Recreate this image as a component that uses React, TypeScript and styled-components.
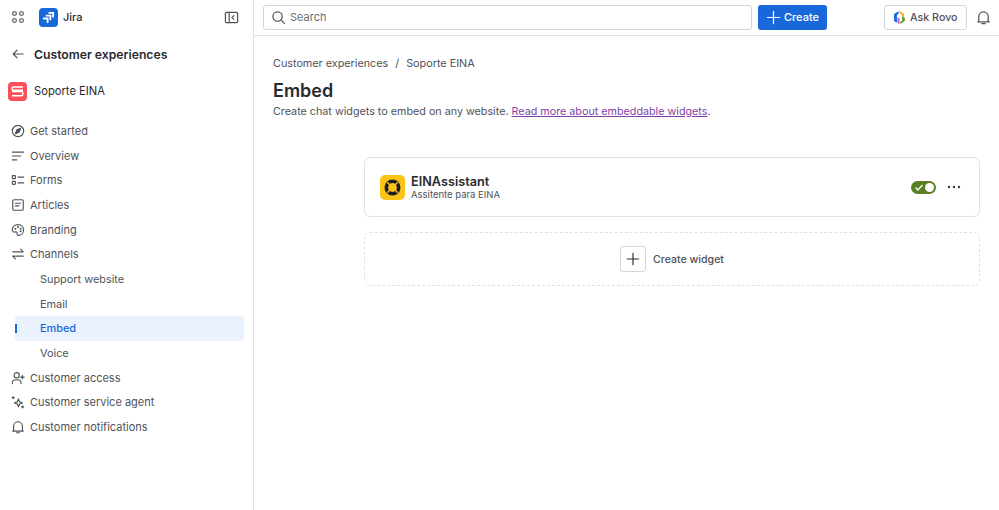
import * as React from 'react'
import styled, { createGlobalStyle } from 'styled-components'

const GlobalStyle = createGlobalStyle`
  html, body { margin: 0; padding: 0; background: #fff; }
  body { font-family: Inter, "Liberation Sans", sans-serif; color: #292a2e; }
`

const Page = styled.div`
  display: flex;
  width: 999px;
  height: 510px;
  overflow: hidden;
`

const Sidebar = styled.aside`
  width: 254px;
  flex: none;
  box-sizing: border-box;
  border-right: 1px solid #dfe1e6;
  padding: 7px 9px 0 0;
`

const AppRow = styled.div`
  display: flex;
  align-items: center;
  height: 20px;
  padding-left: 11px;
`

const JiraName = styled.span`
  font-size: 11px;
  font-weight: 500;
  margin-left: 5px;
  color: #292a2e;
`

const CollapseButton = styled.span`
  margin-left: auto;
  margin-right: 5px;
  display: flex;
`

const BackRow = styled.div`
  display: flex;
  align-items: center;
  height: 20px;
  margin-top: 17px;
  padding-left: 11px;
  gap: 9px;
`

const BackTitle = styled.span`
  font-size: 12.2px;
  font-weight: 600;
  color: #292a2e;
`

const ProjectRow = styled.div`
  display: flex;
  align-items: center;
  gap: 7px;
  height: 20px;
  margin-top: 17px;
  padding-left: 8px;
  font-size: 11.2px;
  color: #292a2e;
`

const NavList = styled.nav`
  display: flex;
  flex-direction: column;
  margin-top: 17.9px;
`

const NavItem = styled.div<{ $sub?: boolean; $active?: boolean }>`
  position: relative;
  display: flex;
  align-items: center;
  gap: 5px;
  height: 24.65px;
  flex: none;
  box-sizing: border-box;
  margin-left: ${p => (p.$sub ? '15px' : '0')};
  padding-left: ${p => (p.$sub ? '25px' : '11px')};
  font-size: ${p => (p.$sub ? '10.9px' : '11px')};
  font-weight: ${p => (p.$active ? 500 : 400)};
  color: ${p => (p.$active ? '#1868db' : '#505258')};
  background: ${p => (p.$active ? '#e9f2fe' : 'transparent')};
  border-radius: 3px;
`

const ActiveMark = styled.span`
  position: absolute;
  left: 0;
  top: 8px;
  width: 1.5px;
  height: 9px;
  background: #1868db;
`

const Main = styled.main`
  flex: 1;
  min-width: 0;
  display: flex;
  flex-direction: column;
`

const TopBar = styled.header`
  display: flex;
  align-items: center;
  height: 36px;
  flex: none;
  box-sizing: border-box;
  border-bottom: 1px solid #dfe1e6;
  padding: 0 0 1px 9px;
`

const SearchBox = styled.div`
  display: flex;
  align-items: center;
  gap: 4px;
  width: 489px;
  height: 25px;
  box-sizing: border-box;
  border: 1px solid #d4d6db;
  border-radius: 3px;
  padding-left: 7px;
  font-size: 11px;
  color: #6b6e76;
`

const CreateButton = styled.button`
  display: flex;
  align-items: center;
  gap: 3px;
  width: 69px;
  height: 25px;
  margin-left: 6px;
  padding: 0 0 0 8px;
  border: 0;
  border-radius: 3px;
  background: #1868db;
  color: #fff;
  font: 500 11px Inter, sans-serif;
`

const RovoButton = styled.button`
  display: flex;
  align-items: center;
  gap: 3px;
  width: 83px;
  height: 25px;
  margin-left: 57px;
  padding: 0 0 0 7px;
  box-sizing: border-box;
  border: 1px solid #d4d6db;
  border-radius: 3px;
  background: #fff;
  color: #505258;
  font: 500 10.7px Inter, sans-serif;
`

const BellButton = styled.span`
  display: flex;
  margin-left: 9px;
`

const Content = styled.div`
  padding: 21px 19px 0 19px;
`

const Breadcrumbs = styled.div`
  display: flex;
  gap: 7px;
  font-size: 10.8px;
  line-height: 14px;
  color: #505258;
`

const Title = styled.h1`
  margin: 8px 0 0;
  font-size: 18px;
  line-height: 24px;
  font-weight: 600;
  color: #292a2e;
`

const Lead = styled.p`
  margin: 2px 0 0;
  font-size: 10.75px;
  line-height: 14px;
  color: #505258;
`

const LeadLink = styled.a`
  color: #803fa5;
  text-decoration: underline;
`

const Widgets = styled.section`
  display: flex;
  flex-direction: column;
  gap: 15px;
  margin: 38px 0 0 91px;
  width: 616px;
`

const WidgetCard = styled.div`
  display: flex;
  align-items: center;
  height: 60px;
  box-sizing: border-box;
  border: 1px solid #dfe1e6;
  border-radius: 6px;
  padding: 0 18px 0 15px;
`

const WidgetLogo = styled.span`
  display: flex;
  align-items: center;
  justify-content: center;
  width: 25px;
  height: 25px;
  border-radius: 5px;
  background: #fcc419;
`

const WidgetText = styled.div`
  display: flex;
  flex-direction: column;
  margin-left: 6px;
`

const WidgetName = styled.span`
  font-size: 12.7px;
  line-height: 15px;
  font-weight: 600;
  color: #292a2e;
`

const WidgetDesc = styled.span`
  font-size: 9.5px;
  line-height: 12px;
  color: #505258;
`

const Toggle = styled.span`
  position: relative;
  display: block;
  width: 25px;
  height: 13px;
  margin-left: auto;
  border-radius: 7px;
  background: #5b7f24;
`

const ToggleKnob = styled.span`
  position: absolute;
  right: 2px;
  top: 2px;
  width: 9px;
  height: 9px;
  border-radius: 50%;
  background: #fff;
`

const ToggleCheck = styled.svg`
  position: absolute;
  left: 3px;
  top: 2px;
`

const MoreDots = styled.span`
  display: flex;
  margin-left: 11px;
`

const AddCard = styled.div`
  display: flex;
  align-items: center;
  justify-content: center;
  gap: 7px;
  height: 54px;
  box-sizing: border-box;
  border: 1px dashed #dfe1e6;
  border-radius: 6px;
  font-size: 10.6px;
  font-weight: 500;
  color: #505258;
`

const AddSquare = styled.span`
  display: flex;
  align-items: center;
  justify-content: center;
  width: 26px;
  height: 26px;
  box-sizing: border-box;
  border: 1px solid #d4d6db;
  border-radius: 3px;
`

type IconProps = { size?: number; color?: string }

const Stroke: React.FC<IconProps & { children: React.ReactNode }> = ({ size = 14, color = '#505258', children }) => (
  <svg width={size} height={size} viewBox="0 0 16 16" fill="none" stroke={color} strokeWidth="1.3" strokeLinecap="round" strokeLinejoin="round">
    {children}
  </svg>
)

const AppsIcon = () => (
  <Stroke size={14}>
    <rect x="2" y="2" width="4" height="4" rx="1.4" />
    <rect x="10" y="2" width="4" height="4" rx="1.4" />
    <rect x="2" y="10" width="4" height="4" rx="1.4" />
    <rect x="10" y="10" width="4" height="4" rx="1.4" />
  </Stroke>
)

const JiraLogoMark = styled.svg`
  margin-left: 14px;
  flex: none;
`

const JiraLogo = () => (
  <JiraLogoMark width="19" height="19" viewBox="0 0 19 19">
    <rect width="19" height="19" rx="4" fill="#1868db" />
    <path d="M9.5 4h5.5v5.5h-1.8V5.8H9.5z" fill="#fff" />
    <path d="M6.8 6.8h5.5v5.5h-1.8V8.6H6.8z" fill="#fff" />
    <path d="M4 9.6h5.5V15H7.7v-3.6H4z" fill="#fff" />
  </JiraLogoMark>
)

const CollapseIcon = () => (
  <Stroke size={15}>
    <rect x="1.5" y="2.5" width="13" height="11" rx="1.2" />
    <path d="M5.5 2.5v11M10.5 6L8.5 8l2 2" />
  </Stroke>
)

const BackIcon = () => (
  <Stroke size={14}>
    <path d="M14 8H2.5M7 3.5L2.5 8 7 12.5" />
  </Stroke>
)

const ProjectLogo = () => (
  <svg width="19" height="19" viewBox="0 0 19 19">
    <rect width="19" height="19" rx="4" fill="#fc4f5c" />
    <path d="M15 5H5.2a1 1 0 0 0-1 1v1.2a1 1 0 0 0 1 1H15M4 9.5h9.8a1 1 0 0 1 1 1v2.2a1 1 0 0 1-1 1H4" stroke="#fff" strokeWidth="1.4" fill="none" />
  </svg>
)

const CompassIcon = () => (
  <Stroke>
    <circle cx="8" cy="8" r="6.5" />
    <path d="M11 5L9.3 9.3 5 11l1.7-4.3z" fill="#505258" />
  </Stroke>
)

const OverviewIcon = () => (
  <Stroke>
    <path d="M1.5 3.5h13M1.5 8h9.5M1.5 12.5h5" />
  </Stroke>
)

const FormsIcon = () => (
  <Stroke>
    <rect x="1.5" y="3" width="3.5" height="3.5" rx=".6" />
    <rect x="1.5" y="9.5" width="3.5" height="3.5" rx=".6" />
    <path d="M8 4.7h6.5M8 11.3h6.5" />
  </Stroke>
)

const ArticlesIcon = () => (
  <Stroke>
    <rect x="2" y="2" width="12" height="12" rx="1.5" />
    <path d="M5 6h6M5 9h4" />
  </Stroke>
)

const BrandingIcon = () => (
  <Stroke>
    <path d="M8 1.8c-3.8 0-6.6 2.7-6.6 5.9 0 2 1.5 3 3 2.6 1.5-.4 2.9.1 2.6 1.7-.3 1.5.4 2.3 1.5 2.2 3.4-.3 5.9-3.2 5.9-6.5 0-3.3-2.7-5.9-6.4-5.9z" />
    <circle cx="5" cy="6.5" r=".5" fill="#505258" />
    <circle cx="8" cy="4.7" r=".5" fill="#505258" />
    <circle cx="11" cy="6.5" r=".5" fill="#505258" />
    <circle cx="11" cy="9.5" r=".5" fill="#505258" />
  </Stroke>
)

const ChannelsIcon = () => (
  <Stroke>
    <path d="M2 5.5h12M11 2.5l3 3M14 10.5H2M5 13.5l-3-3" />
  </Stroke>
)

const CustomerAccessIcon = () => (
  <Stroke>
    <circle cx="6.5" cy="4.8" r="3" />
    <path d="M1.5 14.5v-1.2c0-2 1.7-3.3 5-3.3s5 1.3 5 3.3v1.2M13 5v4M11 7h4" />
  </Stroke>
)

const AgentIcon = () => (
  <Stroke>
    <path d="M8.5 4.5l1.3 3.2 3.2 1.3-3.2 1.3-1.3 3.2-1.3-3.2L4 9l3.2-1.3z" />
    <path d="M2.5 1.8v2.4M1.3 3h2.4M13.3 12.3v2.4M12.1 13.5h2.4" />
  </Stroke>
)

const BellIcon: React.FC<IconProps> = ({ size = 14, color }) => (
  <Stroke size={size} color={color}>
    <path d="M3 11.5V7a5 5 0 0 1 10 0v4.5l1 1.2H2zM6.3 14.6h3.4" />
  </Stroke>
)

const SearchIcon = () => (
  <Stroke size={15} color="#505258">
    <circle cx="7" cy="7" r="5" />
    <path d="M11 11l3.5 3.5" />
  </Stroke>
)

const PlusIcon: React.FC<IconProps> = ({ size = 14, color }) => (
  <Stroke size={size} color={color}>
    <path d="M8 1.5v13M1.5 8h13" />
  </Stroke>
)

const RovoLogo = () => (
  <svg width="15" height="15" viewBox="0 0 14 14">
    <path d="M6.2 1.2L2.6 3.3a1.4 1.4 0 0 0-.7 1.2v5a1.4 1.4 0 0 0 .7 1.2l2 1.1V4.6l1.6-1z" fill="#1868db" />
    <path d="M7 1l3.6 2.1c.3.2.6.5.7 1V7L9.4 5.9V4.5L7 3z" fill="#f9a825" />
    <path d="M12 7.2v2.4c0 .5-.3 1-.7 1.2L7.8 13v-2l1.6-1V6z" fill="#6a9a23" />
    <path d="M7 13.2l-1.8-1V6.8L7 8z" fill="#af59e1" />
  </svg>
)

const LifebuoyIcon = () => (
  <svg width="19" height="19" viewBox="0 0 19 19">
    <circle cx="9.5" cy="9.5" r="6.2" fill="none" stroke="#1f1f21" strokeWidth="3.6" />
    <path d="M4.2 4.2l3.2 3.2M14.8 4.2l-3.2 3.2M4.2 14.8l3.2-3.2M14.8 14.8l-3.2-3.2" stroke="#fcc419" strokeWidth="1.4" />
  </svg>
)

const primaryNav = [
  { label: 'Get started', icon: <CompassIcon /> },
  { label: 'Overview', icon: <OverviewIcon /> },
  { label: 'Forms', icon: <FormsIcon /> },
  { label: 'Articles', icon: <ArticlesIcon /> },
  { label: 'Branding', icon: <BrandingIcon /> },
  { label: 'Channels', icon: <ChannelsIcon /> },
]

const channelNav = ['Support website', 'Email', 'Embed', 'Voice']

const secondaryNav = [
  { label: 'Customer access', icon: <CustomerAccessIcon /> },
  { label: 'Customer service agent', icon: <AgentIcon /> },
  { label: 'Customer notifications', icon: <BellIcon /> },
]

const App: React.FC = () => (
  <Page>
    <GlobalStyle />
    <Sidebar>
      <AppRow>
        <AppsIcon />
        <JiraLogo />
        <JiraName>Jira</JiraName>
        <CollapseButton><CollapseIcon /></CollapseButton>
      </AppRow>
      <BackRow>
        <BackIcon />
        <BackTitle>Customer experiences</BackTitle>
      </BackRow>
      <ProjectRow>
        <ProjectLogo />
        Soporte EINA
      </ProjectRow>
      <NavList>
        {primaryNav.map(item => (
          <NavItem key={item.label}>{item.icon}{item.label}</NavItem>
        ))}
        {channelNav.map(label => (
          <NavItem key={label} $sub $active={label === 'Embed'}>
            {label === 'Embed' && <ActiveMark />}
            {label}
          </NavItem>
        ))}
        {secondaryNav.map(item => (
          <NavItem key={item.label}>{item.icon}{item.label}</NavItem>
        ))}
      </NavList>
    </Sidebar>
    <Main>
      <TopBar>
        <SearchBox><SearchIcon />Search</SearchBox>
        <CreateButton><PlusIcon size={15} color="#fff" />Create</CreateButton>
        <RovoButton><RovoLogo />Ask Rovo</RovoButton>
        <BellButton><BellIcon size={15} /></BellButton>
      </TopBar>
      <Content>
        <Breadcrumbs>
          <span>Customer experiences</span>
          <span>/</span>
          <span>Soporte EINA</span>
        </Breadcrumbs>
        <Title>Embed</Title>
        <Lead>
          Create chat widgets to embed on any website. <LeadLink href="#">Read more about embeddable widgets</LeadLink>.
        </Lead>
        <Widgets>
          <WidgetCard>
            <WidgetLogo><LifebuoyIcon /></WidgetLogo>
            <WidgetText>
              <WidgetName>EINAssistant</WidgetName>
              <WidgetDesc>Assitente para EINA</WidgetDesc>
            </WidgetText>
            <Toggle>
              <ToggleCheck width="10" height="9" viewBox="0 0 10 9" fill="none" stroke="#fff" strokeWidth="1.3">
                <path d="M1.5 4.5l2.3 2.5L8.5 2" />
              </ToggleCheck>
              <ToggleKnob />
            </Toggle>
            <MoreDots>
              <svg width="14" height="4" viewBox="0 0 14 4" fill="#3b3d42">
                <circle cx="2" cy="2" r="1.2" />
                <circle cx="7" cy="2" r="1.2" />
                <circle cx="12" cy="2" r="1.2" />
              </svg>
            </MoreDots>
          </WidgetCard>
          <AddCard>
            <AddSquare><PlusIcon size={14} color="#292a2e" /></AddSquare>
            Create widget
          </AddCard>
        </Widgets>
      </Content>
    </Main>
  </Page>
)

export default App
